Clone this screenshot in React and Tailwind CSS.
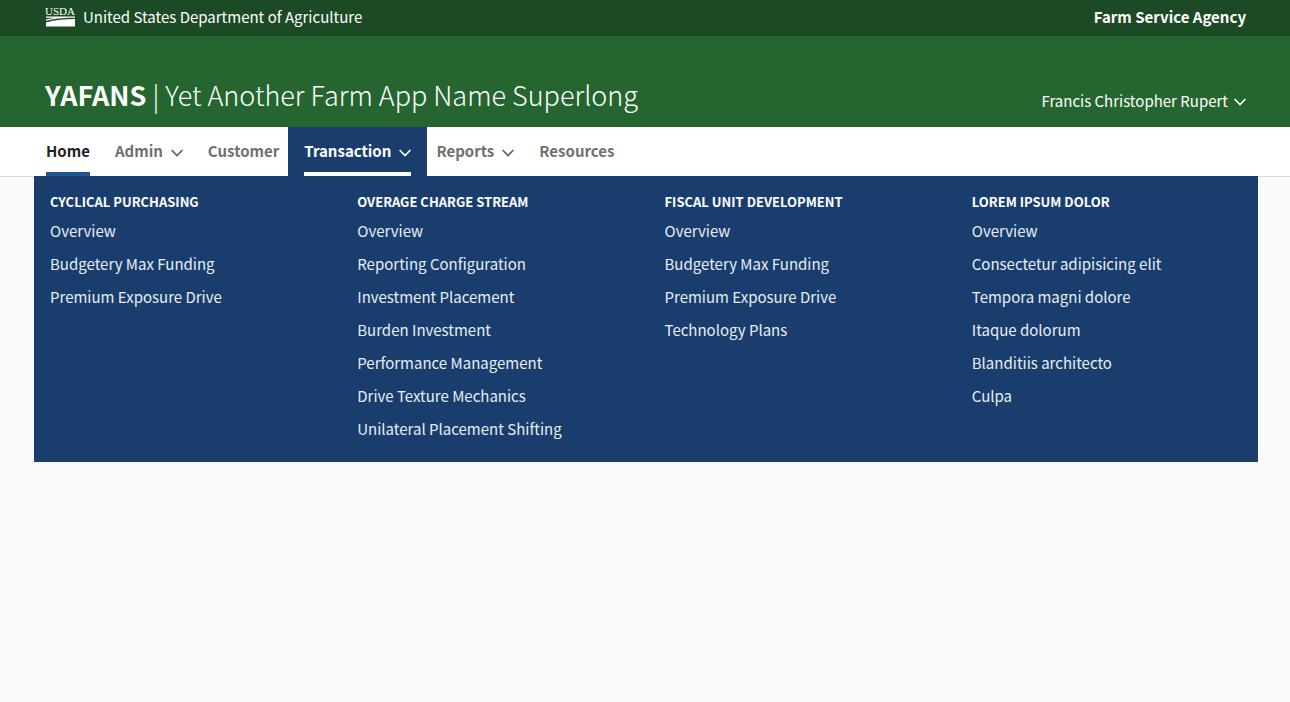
import React from "react";

const NAV = [
  { label: "Home", current: true },
  { label: "Admin", menu: true },
  { label: "Customer" },
  { label: "Transaction", menu: true, open: true },
  { label: "Reports", menu: true },
  { label: "Resources" },
];

const COLUMNS = [
  { title: "Cyclical Purchasing", links: ["Overview", "Budgetery Max Funding", "Premium Exposure Drive"] },
  {
    title: "Overage Charge Stream",
    links: [
      "Overview",
      "Reporting Configuration",
      "Investment Placement",
      "Burden Investment",
      "Performance Management",
      "Drive Texture Mechanics",
      "Unilateral Placement Shifting",
    ],
  },
  {
    title: "Fiscal Unit Development",
    links: ["Overview", "Budgetery Max Funding", "Premium Exposure Drive", "Technology Plans"],
  },
  {
    title: "Lorem Ipsum Dolor",
    links: [
      "Overview",
      "Consectetur adipisicing elit",
      "Tempora magni dolore",
      "Itaque dolorum",
      "Blanditiis architecto",
      "Culpa",
    ],
  },
];

function Chevron({ className = "" }) {
  return (
    <svg className={`h-2 w-3 shrink-0 ${className}`} viewBox="0 0 12 8" fill="none" stroke="currentColor" strokeWidth="1.7" aria-hidden="true">
      <path d="M0.6 1 L6 6.5 L11.4 1" />
    </svg>
  );
}

function Logo() {
  return (
    <svg className="h-5 w-[30px] shrink-0 overflow-visible" viewBox="0 0 30 20" fill="#fff" role="img" aria-label="USDA">
      <text x="0" y="8" fontFamily="'Liberation Serif', serif" fontSize="11" fill="#fff">USDA</text>
      <path d="M1 9.6 H30 V10.8 C22 10.7 14 11.3 8 12.2 C5 12.7 3 13.2 1 13.8 V12.6 C4 11.8 7 11.2 10 10.8 H1 Z" />
      <path d="M1 15.4 C10 12.8 20 11.9 30 11.9 V19.4 H1 Z" />
    </svg>
  );
}

function NavItem({ item }) {
  const color = item.current ? "text-[#222]" : item.open ? "text-white" : "text-[#71706e]";
  const bar = item.current ? "border-[#205493]" : item.open ? "border-white" : "border-transparent";
  const inner = (
    <span className={`flex h-full items-center gap-2 border-b-4 pt-0.5 ${bar}`}>
      {item.label}
      {item.menu && <Chevron className={item.open ? "mt-1" : "mt-1 text-[#5b616b]"} />}
    </span>
  );
  return (
    <li className={item.open ? "-mx-4 bg-[#193e6d] px-4" : ""}>
      {item.menu ? (
        <button type="button" aria-expanded={!!item.open} className={`block h-full ${color}`}>
          {inner}
        </button>
      ) : (
        <a href="#" aria-current={item.current ? "page" : undefined} className={`block h-full ${color}`}>
          {inner}
        </a>
      )}
    </li>
  );
}

export default function App() {
  return (
    <div className="min-h-screen bg-[#f9fafc] font-['Noto_Sans_CJK_SC',sans-serif] text-[15px] leading-6">
      <header>
        <div className="flex h-9 items-center justify-between bg-[#1c4a25] pr-11 pb-0.5 pl-[45px] text-white">
          <a href="#" className="flex items-center gap-2">
            <Logo />
            United States Department of Agriculture
          </a>
          <a href="#" className="font-bold">Farm Service Agency</a>
        </div>
        <div className="flex h-[91px] items-end justify-between bg-[#256530] pr-11 pb-3.5 pl-[45px] text-white">
          <h1 className="text-[27px] leading-9 font-light">
            <a href="#">
              <strong className="font-bold">YAFANS</strong> | Yet Another Farm App Name Superlong
            </a>
          </h1>
          <button type="button" className="flex items-center gap-1.5">
            Francis Christopher Rupert
            <Chevron className="mt-0.5" />
          </button>
        </div>
        <nav aria-label="Primary" className="relative border-b border-[#d6d7d9] bg-white">
          <ul className="flex h-[49px] gap-[25px] pl-[46px] font-bold">
            {NAV.map((item) => (
              <NavItem key={item.label} item={item} />
            ))}
          </ul>
          <div className="absolute top-[49px] right-8 left-[34px] grid grid-cols-4 gap-x-[37px] bg-[#193e6d] px-4 pt-4 pb-[17px] text-white">
            {COLUMNS.map((col) => (
              <section key={col.title}>
                <h2 className="mb-0.5 text-[13px] leading-5 font-bold uppercase">{col.title}</h2>
                <ul>
                  {col.links.map((link) => (
                    <li key={link}>
                      <a href="#" className="block py-1 leading-[25px] text-[#e8edf4]">{link}</a>
                    </li>
                  ))}
                </ul>
              </section>
            ))}
          </div>
        </nav>
      </header>
    </div>
  );
}
